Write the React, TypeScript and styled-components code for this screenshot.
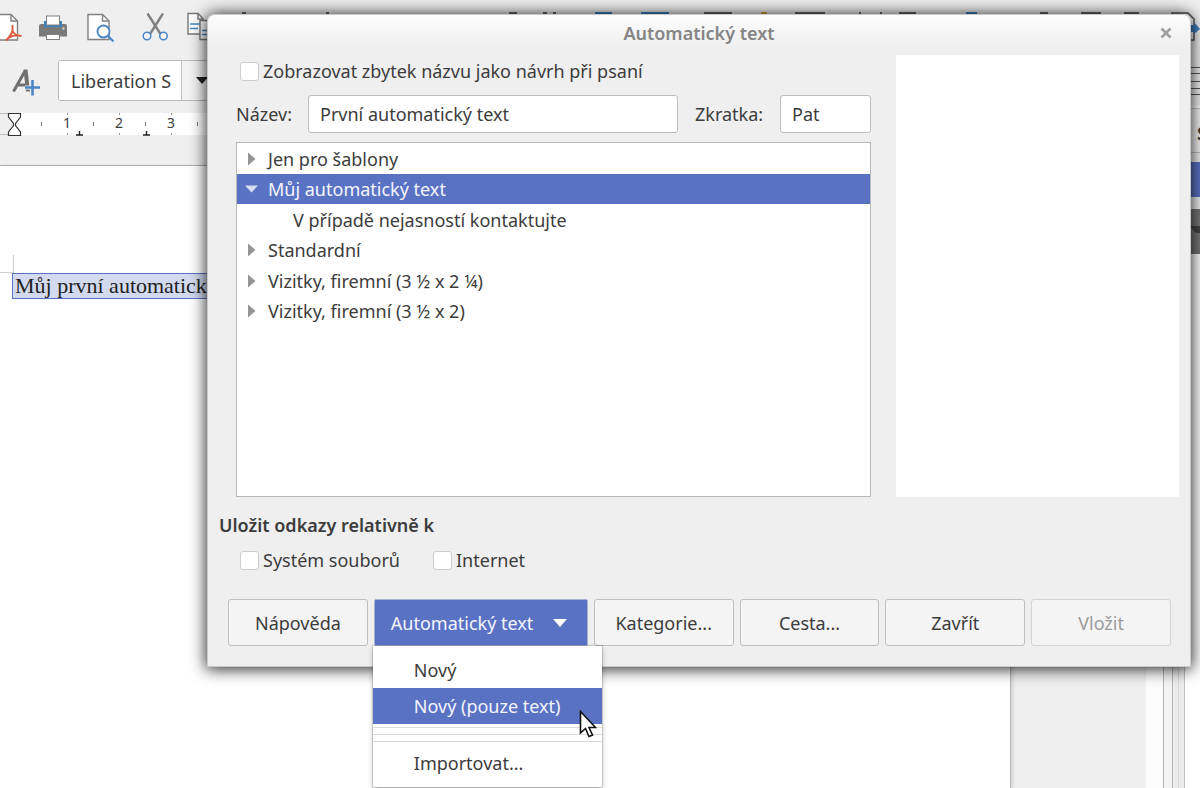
import React from 'react';
import styled, { createGlobalStyle } from 'styled-components';

const UI_FONT = '"Noto Sans", "Open Sans", sans-serif';
const BLUE = '#5a72c4';
const INK = '#3c3c3c';

const GlobalStyle = createGlobalStyle`
  *, *::before, *::after { box-sizing: border-box; }
  html, body { margin: 0; padding: 0; }
  body { background: #efefef; color: ${INK}; font: 18px/24px ${UI_FONT}; }
  button, input { font: inherit; color: inherit; margin: 0; }
`;

/* ---------- Writer window ---------- */

const Desktop = styled.div`
  position: relative;
  min-height: 100vh;
  display: flex;
  flex-direction: column;
  overflow: hidden;
`;

const Toolbar = styled.div`
  display: flex;
  height: 56px;
  padding-top: 12px;
  align-items: flex-start;
  overflow: hidden;
`;

const ToolButton = styled.button<{ $gap?: number }>`
  flex: none;
  display: block;
  margin-right: ${(p) => p.$gap ?? 20}px;
  padding: 0;
  border: 0;
  background: none;
  svg { display: block; }
`;

const ToolStrip = styled.svg`
  flex: none;
  display: block;
`;

const FormatBar = styled.div`
  display: flex;
  align-items: center;
  height: 49px;
  padding: 0 0 0 11px;
`;

const FontBox = styled.div`
  display: flex;
  width: 150px;
  height: 41px;
  margin-left: 17px;
  border: 1px solid #b9b9b9;
  border-radius: 3px;
  background: #fff;
  overflow: hidden;
`;

const FontInput = styled.input`
  width: 123px;
  padding: 0 0 0 12px;
  border: 0;
  border-right: 1px solid #c4c4c4;
  background: #fff;
`;

const FontArrow = styled.button`
  flex: 1;
  padding: 0 0 0 14px;
  border: 0;
  background: #f2f2f2;
  svg { display: block; }
`;

const AlignGlyph = styled.svg`
  display: block;
  margin-left: auto;
`;

const Body = styled.div`
  flex: 1;
  display: flex;
`;

const Editor = styled.div`
  flex: 1;
  min-width: 0;
  display: flex;
  flex-direction: column;
  padding-top: 8px;
`;

const Ruler = styled.div`
  position: relative;
  display: flex;
  height: 22px;
  background: #fff;
`;

const RulerMargin = styled.div`
  flex: none;
  width: 14px;
  border: solid #bdbdbd;
  border-width: 1px 0;
  background: #efefef;
`;

const RulerScale = styled.div`
  display: flex;
  padding-left: 27px;
`;

const RulerCell = styled.div`
  width: 52px;
  font-size: 14px;
  line-height: 20px;
  text-align: center;
  background:
    linear-gradient(#777, #777) 0 9px / 1px 4px no-repeat,
    linear-gradient(#999, #999) 26px 0 / 1px 2px no-repeat,
    linear-gradient(#999, #999) 26px 20px / 1px 2px no-repeat;
`;

const RulerMarks = styled.svg`
  position: absolute;
  left: 0;
  top: 0;
`;

const Workspace = styled.div`
  flex: 1;
  display: flex;
  margin-top: 30px;
`;

const PageArea = styled.div`
  flex: 1;
  border-top: 1px solid #b5b5b5;
  padding-right: 135px;
`;

const Sheet = styled.div`
  height: 100%;
  padding-top: 89px;
  background: #fff;
  border-right: 1px solid #b9b9b9;
  box-shadow: 2px 0 3px rgba(0, 0, 0, 0.12);
`;

const MarginCorner = styled.div`
  width: 14px;
  height: 18px;
  border: solid #cfcfcf;
  border-width: 0 1px 1px 0;
`;

const Paragraph = styled.p`
  width: 270px;
  margin: 0 0 0 12px;
  padding-left: 2px;
  border: 1px solid ${BLUE};
  background: #d3daf0;
  font: 22px/24px "Liberation Serif", serif;
  color: #222;
  white-space: nowrap;
`;

const ScrollTrack = styled.div`
  width: 18px;
  background: #fcfcfc;
  border-right: 1px solid #b4b4b4;
`;

const Splitter = styled.div`
  width: 21px;
  border-right: 1px solid #c0c0c0;
  background: linear-gradient(90deg, #f4f4f4 8px, #b4b4b4 8px 9px, #ececec 9px 14px, #d6d6d6 14px 15px, #ececec 15px);
`;

const SideDeck = styled.aside`
  display: flex;
  flex-direction: column;
  width: 15px;
  padding-top: 3px;
  background: #fff;
`;

const SideHeader = styled.div`
  height: 45px;
  padding: 12px 0 0 12px;
  border: solid #c4c4c4;
  border-width: 1px 0;
  background: #f4f4f4;
  overflow: hidden;
  white-space: nowrap;
  font-weight: 700;
`;

const SideRail = styled.div`
  height: 101px;
  padding-top: 9px;
  background: #f0f0f0;
`;

const RailActive = styled.div`
  height: 35px;
  background: ${BLUE};
`;

const RailDark = styled.div`
  height: 45px;
  margin-top: 12px;
  background: #777;
  svg { display: block; margin-left: auto; }
`;

/* ---------- Dialog ---------- */

const Dialog = styled.section`
  position: absolute;
  left: 207px;
  right: 9px;
  top: 14px;
  display: flex;
  flex-direction: column;
  padding: 0 11px 20px;
  border: 1px solid #c9c9c9;
  border-radius: 8px 8px 0 0;
  background: linear-gradient(#fdfdfd, #efefef 32px);
  box-shadow: 0 1px 16px 1px rgba(0, 0, 0, 0.85);
`;

const TitleBar = styled.header`
  display: grid;
  grid-template-columns: 26px 1fr 26px;
  align-items: center;
  height: 40px;
  padding-bottom: 4px;
`;

const Title = styled.h1`
  grid-column: 2;
  margin: 0;
  font-size: 18px;
  line-height: 24px;
  font-weight: 600;
  text-align: center;
  color: #858585;
`;

const CloseButton = styled.button`
  display: grid;
  place-items: center;
  padding: 0;
  border: 0;
  background: none;
`;

const Main = styled.div`
  display: flex;
  gap: 25px;
  height: 442px;
`;

const Left = styled.div`
  flex: 1;
  min-width: 0;
  display: flex;
  flex-direction: column;
  padding-left: 17px;
`;

const Preview = styled.div`
  width: 283px;
  background: #fff;
`;

const Check = styled.label`
  display: flex;
  align-items: center;
  gap: 4px;
  margin-left: 4px;
  white-space: nowrap;
`;

const Tick = styled.input`
  appearance: none;
  width: 19px;
  height: 19px;
  border: 1px solid #cdcdcd;
  border-radius: 3px;
  background: #fff;
  &:checked { background: ${BLUE}; }
`;

const SuggestRow = styled.div`
  display: flex;
  padding: 4px 0 12px;
`;

const Fields = styled.div`
  display: flex;
  align-items: center;
  height: 38px;
`;

const FieldLabel = styled.label<{ $width: number }>`
  flex: none;
  width: ${(p) => p.$width}px;
`;

const Field = styled.input<{ $width?: number }>`
  ${(p) => (p.$width ? `flex: none; width: ${p.$width}px;` : 'flex: 1; min-width: 0; margin-right: 17px;')}
  height: 38px;
  padding: 0 11px;
  border: 1px solid #bdbdbd;
  border-radius: 3px;
  background: #fff;
`;

const Tree = styled.ul`
  flex: 1;
  margin: 9px 0 0;
  padding: 0;
  border: 1px solid #b8b8b8;
  background: #fff;
  list-style: none;
`;

const TreeRow = styled.li<{ $selected?: boolean; $child?: boolean }>`
  display: flex;
  align-items: center;
  height: 31px;
  padding-left: ${(p) => (p.$child ? 56 : 8)}px;
  background: ${(p) => (p.$selected ? BLUE : 'transparent')};
  color: ${(p) => (p.$selected ? '#f3f5fc' : INK)};
  &:nth-child(even) { height: 30px; }
`;

const Arrow = styled.svg`
  flex: none;
  width: 14px;
  height: 14px;
  margin-right: 9px;
`;

const GroupTitle = styled.h2`
  margin: 16px 0 0;
  font-size: 18px;
  line-height: 24px;
  font-weight: 600;
`;

const LinkChecks = styled.div`
  display: flex;
  gap: 29px;
  margin: 11px 0 0 17px;
`;

const Buttons = styled.div`
  display: flex;
  gap: 6px;
  margin: 27px 8px 0 9px;
`;

const PushButton = styled.button`
  flex: 1;
  height: 47px;
  padding: 0;
  border: 1px solid #bfbfbf;
  border-radius: 3px;
  background: #f4f4f4;
  &:disabled { color: #9b9b9b; border-color: #d4d4d4; }
`;

const MenuAnchor = styled.div`
  position: relative;
  flex: none;
  width: 214px;
`;

const MenuButton = styled.button`
  display: flex;
  align-items: center;
  justify-content: space-between;
  width: 100%;
  height: 47px;
  padding: 0 20px 0 16px;
  border: 1px solid #a9b0cc;
  border-radius: 2px;
  background: ${BLUE};
  color: #f3f5fc;
`;

const Menu = styled.div`
  position: absolute;
  left: -1px;
  top: 47px;
  width: 229px;
  padding: 6px 0 3px;
  background: #fff;
  box-shadow: 0 0 0 1px rgba(0, 0, 0, 0.12), 0 2px 5px rgba(0, 0, 0, 0.28);
`;

const MenuItem = styled.button<{ $active?: boolean; $tall?: boolean }>`
  display: block;
  width: 100%;
  height: ${(p) => (p.$tall ? 42 : 36)}px;
  padding: 0 0 0 41px;
  border: 0;
  text-align: left;
  background: ${(p) => (p.$active ? BLUE : '#fff')};
  color: ${(p) => (p.$active ? '#f3f5fc' : INK)};
`;

const Divider = styled.hr<{ $height: number }>`
  height: ${(p) => p.$height}px;
  margin: 0;
  border: 0;
  border-bottom: 1px solid #dadada;
`;

const Pointer = styled.svg`
  position: absolute;
  left: 206px;
  top: 63px;
`;

/* ---------- Glyphs ---------- */

const PdfIcon = () => (
  <svg width="24" height="30" viewBox="0 0 24 30">
    <path d="M-4 2.500H11L17.500 9V28H-4Z" fill="#fff" stroke="#808080" strokeWidth="1.400" />
    <path d="M11 2.500V9H17.500" fill="none" stroke="#808080" strokeWidth="1.400" />
    <path d="M12.500 13V18.500C12 22 9.500 25 6 28.500M7.500 26.500C11 24 16 22.500 21.500 24M12.500 18.500C13.500 21 15.500 23 18 23.500" fill="none" stroke="#e0583a" strokeWidth="1.900" />
  </svg>
);

const PrintIcon = () => (
  <svg width="28" height="30" viewBox="0 0 28 30">
    <path d="M2 12H26Q28 12 28 14V24.500H0V14Q0 12 2 12Z" fill="#7a7a7a" />
    <rect x="5" y="9" width="18" height="6" fill="#3f7fc0" />
    <rect x="7.500" y="4" width="13" height="9" fill="#fff" stroke="#808080" />
    <rect x="7.500" y="22.500" width="13" height="5" fill="#fff" stroke="#808080" />
    <rect x="23.500" y="15.500" width="2" height="2" fill="#ddd" />
  </svg>
);

const PreviewIcon = () => (
  <svg width="28" height="30" viewBox="0 0 28 30">
    <path d="M1 2.500H15.500L22 9V27.500H1Z" fill="#fff" stroke="#808080" strokeWidth="1.400" />
    <path d="M15.500 2.500V9H22" fill="none" stroke="#808080" strokeWidth="1.400" />
    <circle cx="16.500" cy="19.500" r="6" fill="#fff" stroke="#4a86c6" strokeWidth="1.800" />
    <path d="M21 24L26.500 29.500" stroke="#4a86c6" strokeWidth="2" />
  </svg>
);

const CutIcon = () => (
  <svg width="28" height="30" viewBox="0 0 28 30">
    <path d="M5.500 1.500L18.500 22M21 1.500L8 22" stroke="#808080" strokeWidth="2.400" fill="none" />
    <circle cx="5" cy="24" r="3.800" fill="#f4f4f4" stroke="#4a86c6" strokeWidth="1.500" />
    <circle cx="21.500" cy="24" r="3.800" fill="#f4f4f4" stroke="#4a86c6" strokeWidth="1.500" />
  </svg>
);

const CopyIcon = () => (
  <svg width="28" height="30" viewBox="0 0 28 30">
    <path d="M1 1.500H11L16 6.500V22H1Z" fill="#fff" stroke="#777" strokeWidth="1.400" />
    <path d="M11 1.500V7H16" fill="none" stroke="#777" strokeWidth="1.400" />
    <path d="M3 12H13M3 16.500H11" fill="none" stroke="#4a86c6" strokeWidth="1.300" />
    <path d="M13 8.500H22L27 13V27.500H13Z" fill="#fff" stroke="#777" strokeWidth="1.400" />
    <path d="M15 18.500H25M15 22.500H25" stroke="#4a86c6" strokeWidth="1.300" />
  </svg>
);

/* Top edges of the remaining tool icons: [x, width, colour] */
const STRIP: [number, number, string][] = [
  [27, 4, '#666'], [111, 3, '#666'], [294, 8, '#666'], [328, 4, '#666'], [338, 3, '#666'],
  [380, 17, '#3f7fc0'], [426, 28, '#3f7fc0'], [489, 28, '#666'], [546, 6, '#d9a441'],
  [580, 30, '#666'], [644, 2, '#666'], [665, 2, '#666'], [684, 17, '#666'], [751, 11, '#3f7fc0'],
  [825, 8, '#666'], [866, 20, '#666'], [909, 15, '#666'],
];

const Collapsed = () => (
  <Arrow viewBox="0 0 14 14" aria-hidden="true"><path d="M3 0.500L10.500 7L3 13.500Z" fill="#959595" /></Arrow>
);
const Expanded = () => (
  <Arrow viewBox="0 0 14 14" aria-hidden="true"><path d="M0 3.500H13L6.500 10.500Z" fill="#d6dcf2" /></Arrow>
);

const NODES = [
  { text: 'Jen pro šablony' },
  { text: 'Můj automatický text', selected: true },
  { text: 'V případě nejasností kontaktujte', child: true },
  { text: 'Standardní' },
  { text: 'Vizitky, firemní (3 ½ x 2 ¼)' },
  { text: 'Vizitky, firemní (3 ½ x 2)' },
];

export default function App() {
  return (
    <>
      <GlobalStyle />
      <Desktop>
        <Toolbar>
          <ToolButton aria-label="PDF" $gap={15}><PdfIcon /></ToolButton>
          <ToolButton aria-label="Tisk"><PrintIcon /></ToolButton>
          <ToolButton aria-label="Náhled" $gap={27}><PreviewIcon /></ToolButton>
          <ToolButton aria-label="Vyjmout" $gap={17}><CutIcon /></ToolButton>
          <ToolButton aria-label="Kopírovat" $gap={0}><CopyIcon /></ToolButton>
          <ToolStrip width="985" height="30" viewBox="0 0 985 30" aria-hidden="true">
            {STRIP.map(([x, w, c]) => <rect key={x} x={x} y="0" width={w} height="6" fill={c} />)}
            <path d="M957 1H973L979 7V28H957Z" fill="#fff" stroke="#555" strokeWidth="1.500" />
            <path d="M975 13H979V10L985 17L979 22V20H975Z" fill="#3f7fc0" />
          </ToolStrip>
        </Toolbar>

        <FormatBar>
          <ToolButton aria-label="Nový styl" $gap={0}>
            <svg width="30" height="31" viewBox="0 0 30 31">
              <path d="M2.500 26.500L14 6M7 20H17" fill="none" stroke="#707070" strokeWidth="3" />
              <path d="M12.500 4.500H16.500L19 26.500H15Z" fill="#707070" />
              <path d="M21.500 14V31M14 22.500H29" stroke="#efefef" strokeWidth="4" />
              <path d="M21.500 15V30.500M14 22.500H29" stroke="#4a86c6" strokeWidth="2.600" />
            </svg>
          </ToolButton>
          <FontBox>
            <FontInput aria-label="Název písma" defaultValue="Liberation S" />
            <FontArrow aria-label="Vybrat písmo">
              <svg width="12" height="7" viewBox="0 0 12 7"><path d="M0 0H12L6 7Z" fill="#222" /></svg>
            </FontArrow>
          </FontBox>
          <AlignGlyph width="12" height="31" viewBox="0 0 12 31" aria-hidden="true">
            <path d="M0 2.500H12M0 8.500H12M0 16.500H12M0 23.500H12M0 29.500H12" stroke="#555" />
          </AlignGlyph>
        </FormatBar>

        <Body>
          <Editor>
            <Ruler>
              <RulerMargin />
              <RulerScale>
                <RulerCell>1</RulerCell>
                <RulerCell>2</RulerCell>
                <RulerCell>3</RulerCell>
                <RulerCell />
              </RulerScale>
              <RulerMarks width="200" height="24" viewBox="0 0 200 24" aria-hidden="true">
                <path d="M8.500 0.500H20.500V4L15.500 10.500V12.500L20.500 19V22.500H8.500V19L13.500 12.500V10.500L8.500 4Z" fill="#fff" stroke="#333" strokeWidth="1.200" />
                <path d="M76 22H83M79.500 18V22M143 22H150M146.500 18V22" stroke="#222" strokeWidth="1.400" />
              </RulerMarks>
            </Ruler>
            <Workspace>
              <PageArea>
                <Sheet>
                  <MarginCorner />
                  <Paragraph>Můj první automatický text</Paragraph>
                </Sheet>
              </PageArea>
              <ScrollTrack />
            </Workspace>
          </Editor>
          <Splitter />
          <SideDeck>
            <SideHeader>Styly</SideHeader>
            <SideRail>
              <RailActive />
              <RailDark>
                <svg width="12" height="24" viewBox="0 0 12 24"><path d="M2 17H12V24H8Z" fill="#444" /></svg>
              </RailDark>
            </SideRail>
          </SideDeck>
        </Body>

        <Dialog role="dialog" aria-labelledby="dialog-title">
          <TitleBar>
            <Title id="dialog-title">Automatický text</Title>
            <CloseButton aria-label="Zavřít okno">
              <svg width="12" height="12" viewBox="0 0 12 12"><path d="M1.500 1.500L10.500 10.500M10.500 1.500L1.500 10.500" stroke="#a0a0a0" strokeWidth="2.600" /></svg>
            </CloseButton>
          </TitleBar>

          <Main>
            <Left>
              <SuggestRow>
                <Check><Tick type="checkbox" />Zobrazovat zbytek názvu jako návrh při psaní</Check>
              </SuggestRow>
              <Fields>
                <FieldLabel htmlFor="name" $width={72}>Název:</FieldLabel>
                <Field id="name" defaultValue="První automatický text" />
                <FieldLabel htmlFor="short" $width={85}>Zkratka:</FieldLabel>
                <Field id="short" $width={91} defaultValue="Pat" />
              </Fields>
              <Tree>
                {NODES.map((n) => (
                  <TreeRow key={n.text} $selected={n.selected} $child={n.child}>
                    {n.child ? null : n.selected ? <Expanded /> : <Collapsed />}
                    {n.text}
                  </TreeRow>
                ))}
              </Tree>
            </Left>
            <Preview />
          </Main>

          <GroupTitle>Uložit odkazy relativně k</GroupTitle>
          <LinkChecks>
            <Check><Tick type="checkbox" />Systém souborů</Check>
            <Check><Tick type="checkbox" />Internet</Check>
          </LinkChecks>

          <Buttons>
            <PushButton>Nápověda</PushButton>
            <MenuAnchor>
              <MenuButton aria-haspopup="menu" aria-expanded="true">
                Automatický text
                <svg width="14" height="8" viewBox="0 0 14 8"><path d="M0 0H14L7 8Z" fill="#fff" /></svg>
              </MenuButton>
              <Menu role="menu">
                <MenuItem role="menuitem">Nový</MenuItem>
                <MenuItem role="menuitem" $active>Nový (pouze text)</MenuItem>
                <Divider $height={4} />
                <Divider $height={7} />
                <Divider $height={7} />
                <MenuItem role="menuitem" $tall>Importovat...</MenuItem>
                <Pointer width="18" height="30" viewBox="0 0 18 30" aria-hidden="true">
                  <path d="M1.500 2.500V24L6.500 19.500L10 27.500L13.500 26L10 18.500H16.500Z" fill="#fff" stroke="#111" strokeWidth="1.600" />
                </Pointer>
              </Menu>
            </MenuAnchor>
            <PushButton>Kategorie...</PushButton>
            <PushButton>Cesta...</PushButton>
            <PushButton>Zavřít</PushButton>
            <PushButton disabled>Vložit</PushButton>
          </Buttons>
        </Dialog>
      </Desktop>
    </>
  );
}
